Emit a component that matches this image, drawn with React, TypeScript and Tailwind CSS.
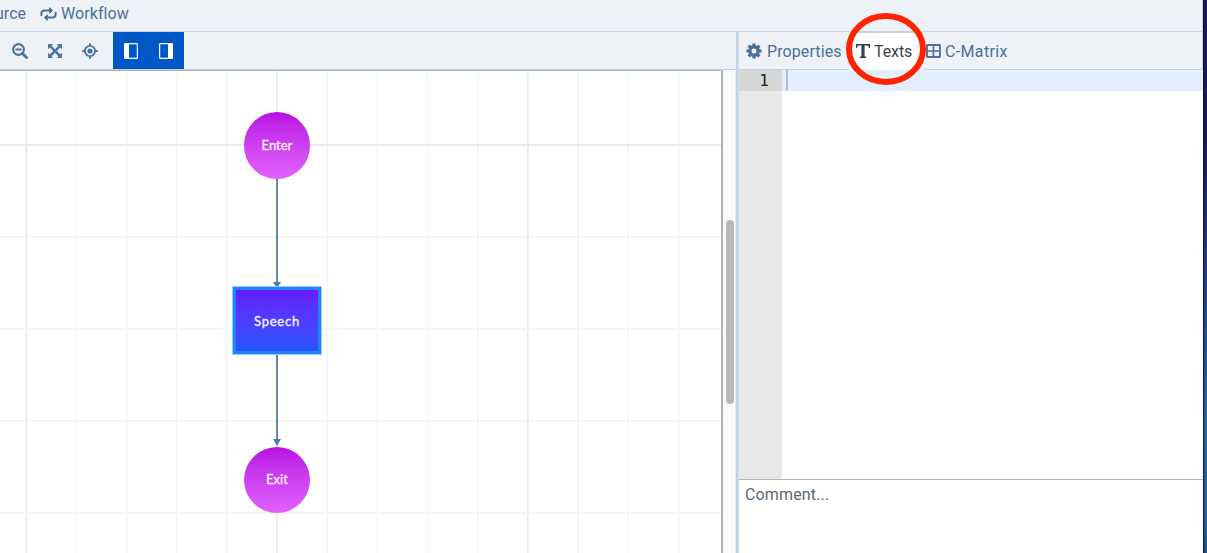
import React from "react";

const verticals = [26.3, 76.4, 126.5, 176.7, 226.8, 277, 327.2, 377.4, 427.5, 477.7, 527.9, 578.1, 628.3, 678.5];
const majorVerticals = [26.3, 277, 527.9];
const horizontals = [74, 166, 258, 350, 442];
const majorHorizontals = [74];

function LoopIcon() {
  return (
    <svg width="17" height="16" viewBox="0 0 17 16" fill="none" stroke="currentColor" strokeWidth="2" strokeLinecap="round">
      <path d="M1.400 9.300V7.400A3 3 0 0 1 4.400 4.400H11" />
      <path d="M15.600 6.700V8.600A3 3 0 0 1 12.600 11.600H6" />
      <path d="M10 1.900 12.600 4.400 10 6.900ZM7 9.100 4.400 11.600 7 14.100Z" fill="currentColor" strokeWidth="1" strokeLinejoin="round" />
    </svg>
  );
}

function ZoomOutIcon() {
  return (
    <svg width="16" height="16" viewBox="0 0 16 16" fill="none" stroke="currentColor" strokeLinecap="round">
      <circle cx="6.5" cy="6.5" r="5.4" strokeWidth="2.1" />
      <path d="M4.2 6.5H8.8" strokeWidth="1.9" />
      <path d="M11 11 14.5 14.5" strokeWidth="2.9" />
    </svg>
  );
}

function FitIcon() {
  return (
    <svg width="16" height="16" viewBox="0 0 16 16" fill="currentColor">
      <path d="M1 1H6.2L4.6 2.8 8 6.2 11.4 2.8 9.8 1H15V6.2L13.2 4.6 9.8 8 13.2 11.4 15 9.8V15H9.8L11.4 13.2 8 9.8 4.6 13.2 6.2 15H1V9.8L2.8 11.4 6.2 8 2.8 4.6 1 6.2Z" />
    </svg>
  );
}

function LocateIcon() {
  return (
    <svg width="16" height="16" viewBox="0 0 16 16" fill="none" stroke="currentColor" strokeWidth="2">
      <circle cx="8" cy="8" r="5.100" strokeWidth="1.900" />
      <circle cx="8" cy="8" r="2.6" fill="currentColor" stroke="none" />
      <path d="M8 .2V3M8 13V15.800M.2 8H3M13 8H15.800" />
    </svg>
  );
}

function PanelIcon({ right = false }: { right?: boolean }) {
  return (
    <svg width="14" height="16" viewBox="0 0 14 16" fill="none">
      <rect x=".6" y=".6" width="12.8" height="14.8" rx=".7" stroke="white" strokeWidth="1.2" />
      <path d={right ? "M9 1H13V15H9Z" : "M1 1H5V15H1Z"} fill="white" />
    </svg>
  );
}

function CogIcon() {
  return (
    <svg width="16" height="16" viewBox="0 0 16 16" fill="none" stroke="currentColor">
      <circle cx="8" cy="8" r="4.200" strokeWidth="3.400" />
      <path d="M8 .4V3M8 13V15.600M.4 8H3M13 8H15.600M2.600 2.600 4.500 4.500M11.500 11.500 13.400 13.400M13.400 2.600 11.500 4.500M4.500 11.500 2.600 13.400" strokeWidth="3.100" />
    </svg>
  );
}

function TypeIcon() {
  return (
    <svg width="14" height="14" viewBox="0 0 14 14" fill="currentColor">
      <path d="M0 0H14V4H12.9C12.7 2.4 12 1.6 10.7 1.6H8.6V11.6C8.6 12.5 9.1 12.9 10.3 13V14H3.7V13C4.9 12.9 5.4 12.5 5.4 11.6V1.6H3.3C2 1.6 1.3 2.4 1.1 4H0Z" />
    </svg>
  );
}

function MatrixIcon() {
  return (
    <svg width="15" height="14" viewBox="0 0 15 14" fill="none" stroke="currentColor" strokeWidth="1.9">
      <rect x=".95" y=".95" width="13" height="12.1" rx=".5" />
      <path d="M7.450 1V13M1 7H14" strokeWidth="1.7" />
    </svg>
  );
}

function CircleNode({ label, place }: { label: string; place: string }) {
  return (
    <div className={`absolute left-[243.7px] flex h-[66.5px] w-[66.5px] items-center justify-center rounded-full bg-gradient-to-b from-[#b80be2] to-[#e260ff] font-['Lato',sans-serif] text-[13px] text-[#fdf0ff] [-webkit-text-stroke:0.35px_#fdf0ff] ${place}`}>
      {label}
    </div>
  );
}

function Canvas() {
  return (
    <div className="relative min-h-0 flex-1 overflow-hidden rounded-tr-[2px] border-t border-r-2 border-[#b1b1b3] bg-white">
      <svg className="absolute top-0 left-0" width="722" height="483" viewBox="0 0 722 483">
        {verticals.map((x) => (
          <path key={x} d={`M${x} 0V483`} stroke={majorVerticals.includes(x) ? "#ebebeb" : "#f4f4f4"} strokeWidth={majorVerticals.includes(x) ? 1.8 : 1.5} />
        ))}
        {horizontals.map((y) => (
          <path key={y} d={`M0 ${y}H722`} stroke={majorHorizontals.includes(y) ? "#ebebeb" : "#f6f6f6"} strokeWidth="1.8" />
        ))}
        <path d="M277 107V213M277 282V370" stroke="#6787a8" strokeWidth="2" />
        <path d="M273 211H281L277 217.500ZM273 368H281L277 375Z" fill="#5579a0" />
      </svg>
      <CircleNode label="Enter" place="top-[41px] pb-[0.5px]" />
      <div className="absolute top-[216px] left-[233px] flex h-[67px] w-[88px] items-center justify-center border-[3px] border-[#1e85f7] bg-gradient-to-b from-[#6519ff] to-[#2353ff] font-['Lato',sans-serif] text-[13px] tracking-[0.75px] text-[#f3f0ff] [-webkit-text-stroke:0.35px_#f3f0ff] outline-1 outline-[#9dcbff]">
        Speech
      </div>
      <CircleNode label="Exit" place="top-[375.500px] pb-px" />
    </div>
  );
}

function Toolbar() {
  return (
    <div className="flex h-[38px] shrink-0 items-center border-b border-[#c6d2df] bg-[#eef2f7] pl-3 text-[#4b739f]">
      <ZoomOutIcon />
      <div className="ml-[19px]"><FitIcon /></div>
      <div className="ml-[19px]"><LocateIcon /></div>
      <div className="ml-[15px] flex h-[37px] w-[71px] items-center gap-[21px] bg-[#0058c7] pl-[11px]">
        <PanelIcon />
        <PanelIcon right />
      </div>
    </div>
  );
}

function Inspector() {
  return (
    <aside className="flex w-[464px] shrink-0 flex-col bg-white">
      <div className="relative flex h-[38px] shrink-0 items-center border-r border-b border-[#c6d2df] bg-[#eef2f7] pl-[7px] text-[#4b6f99]">
        <CogIcon />
        <span className="ml-[5px] w-[82px] pt-0.5 tracking-[0.1px]">Properties</span>
        <div className="relative z-10 -mb-px flex h-[38px] w-[74px] items-center border-t border-[#c6d2df] bg-white pl-[7px] text-[#39434e]">
          <div className="pb-px"><TypeIcon /></div>
          <span className="ml-[4px] tracking-[-0.1px]">Texts</span>
        </div>
        <div className="ml-[3px]"><MatrixIcon /></div>
        <span className="ml-[4px] pt-0.5 tracking-[0.35px]">C-Matrix</span>
        <svg className="absolute top-[-21px] left-[104px] z-20" width="86" height="76" viewBox="0 0 86 76">
          <ellipse cx="43" cy="38" rx="37" ry="33" fill="none" stroke="#ff2200" strokeWidth="6" />
        </svg>
      </div>
      <div className="flex h-[409px] shrink-0">
        <div className="w-[43px] bg-[#e8e8e8] font-['DejaVu_Sans_Mono',monospace] text-[#222]">
          <div className="h-[21px] bg-[#d6d6d6] pr-[13px] text-right leading-[21px]">1</div>
        </div>
        <div className="flex-1">
          <div className="h-[21px] bg-[#e3effe] pl-1">
            <div className="h-full w-0.5 bg-[#b1bfcf]" />
          </div>
        </div>
      </div>
      <div className="flex-1 border-t border-[#a9b8c9] px-[6px] pt-[3px] leading-6 tracking-[0.15px] text-[#5b6873]">Comment...</div>
    </aside>
  );
}

export default function App() {
  return (
    <div className="flex h-[553px] w-[1207px] overflow-hidden bg-white font-['Roboto',sans-serif] text-[16px] leading-5">
      <div className="flex w-[1203px] shrink-0 flex-col">
        <header className="flex h-8 shrink-0 items-center overflow-hidden border-r border-b border-[#c6d2df] bg-[#eef2f7] pb-1 text-[#4b6f99]">
          <div className="flex w-[26px] shrink-0 justify-end whitespace-nowrap">Source</div>
          <div className="ml-[14px]"><LoopIcon /></div>
          <span className="ml-1 tracking-[0.08px]">Workflow</span>
        </header>
        <div className="flex min-h-0 flex-1">
          <main className="flex w-[736px] shrink-0 flex-col">
            <Toolbar />
            <div className="flex min-h-0 flex-1">
              <div className="flex w-[723px] flex-col">
                <Canvas />
              </div>
              <div className="flex-1 border-r border-[#ececec] bg-[#f9f9f9] pt-[150px] pl-[3px]">
                <div className="h-[184px] w-2 rounded-full bg-[#b8b8b8]" />
              </div>
            </div>
          </main>
          <div className="w-[3px] shrink-0 border-r border-[#d3dee9] bg-[#c3d1e1]" />
          <Inspector />
        </div>
      </div>
      <div className="flex-1 border-l border-[#0b1235] bg-[linear-gradient(180deg,#1c1260_0%,#1b135c_24%,#1d3c83_50%,#20649f_75%,#20609c_93%,#205086_100%)]" />
    </div>
  );
}
